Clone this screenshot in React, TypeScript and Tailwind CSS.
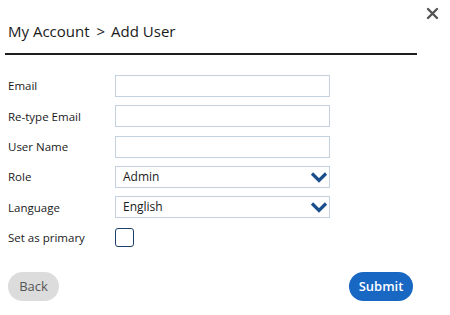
import React from "react";

export default function App() {
  const rows = ["Email", "Re-type Email", "User Name"];
  return (
    <div
      className="relative w-[450px] h-[315px] bg-white text-[#1a1a1a]"
      style={{ fontFamily: '"Open Sans", "Noto Sans", sans-serif' }}
    >
      <button className="absolute left-[425px] top-[6px] w-[14px] h-[14px] flex items-center justify-center">
        <svg width="13" height="13" viewBox="0 0 13 13">
          <path d="M2 2 L11 11 M11 2 L2 11" stroke="#555" strokeWidth="2.4" strokeLinecap="round" />
        </svg>
      </button>
      <div className="pl-[8px] pr-[33px]">
        <div className="h-[53px] flex items-center pt-[9px]">
          <span className="text-[15px] font-medium">My Account</span>
          <span className="text-[15px] ml-[7px] font-medium">&gt;</span>
          <span className="text-[15px] ml-[6px] font-medium">Add User</span>
        </div>
      </div>
      <div className="ml-[5px] w-[412px] h-[2px] bg-[#1e1e1e]" />
      <div className="pl-[8px] pt-[20px] flex flex-col gap-[8.3px]">
        {rows.map((r) => (
          <div key={r} className="flex items-center h-[22px]">
            <div className="w-[107px] text-[11.5px] font-medium">{r}</div>
            <div className="w-[215px] h-[22px] border border-[#c4d2df]" />
          </div>
        ))}
        {["Admin", "English"].map((v) => (
          <div key={v} className="flex items-center h-[22px]">
            <div className="w-[107px] text-[11.5px] font-medium">{v === "Admin" ? "Role" : "Language"}</div>
            <div className="w-[215px] h-[22px] border border-[#c4d2df] flex items-center justify-between pl-[7px] pr-[1px]">
              <span className="text-[12px] font-medium">{v}</span>
              <svg width="18" height="12" viewBox="0 0 18 12">
                <path d="M2 2.5 L9 9.5 L16 2.5" stroke="#1b4e8c" strokeWidth="3.2" fill="none" strokeLinejoin="miter" />
              </svg>
            </div>
          </div>
        ))}
        <div className="flex items-center h-[19px] mt-[2px]">
          <div className="w-[107px] text-[11.5px] font-medium">Set as primary</div>
          <div className="w-[19px] h-[19px] border-[1.5px] border-[#1d3f6b] rounded-[3px]" />
        </div>
      </div>
      <div className="mt-[25px] pl-[8px] pr-[37px] flex justify-between">
        <button className="w-[51px] h-[29px] rounded-full bg-[#dcdcdc] text-[#555] text-[13px] font-medium">Back</button>
        <button className="w-[64px] h-[29px] rounded-full bg-[#1767c3] text-white text-[13px] font-semibold">Submit</button>
      </div>
    </div>
  );
}
